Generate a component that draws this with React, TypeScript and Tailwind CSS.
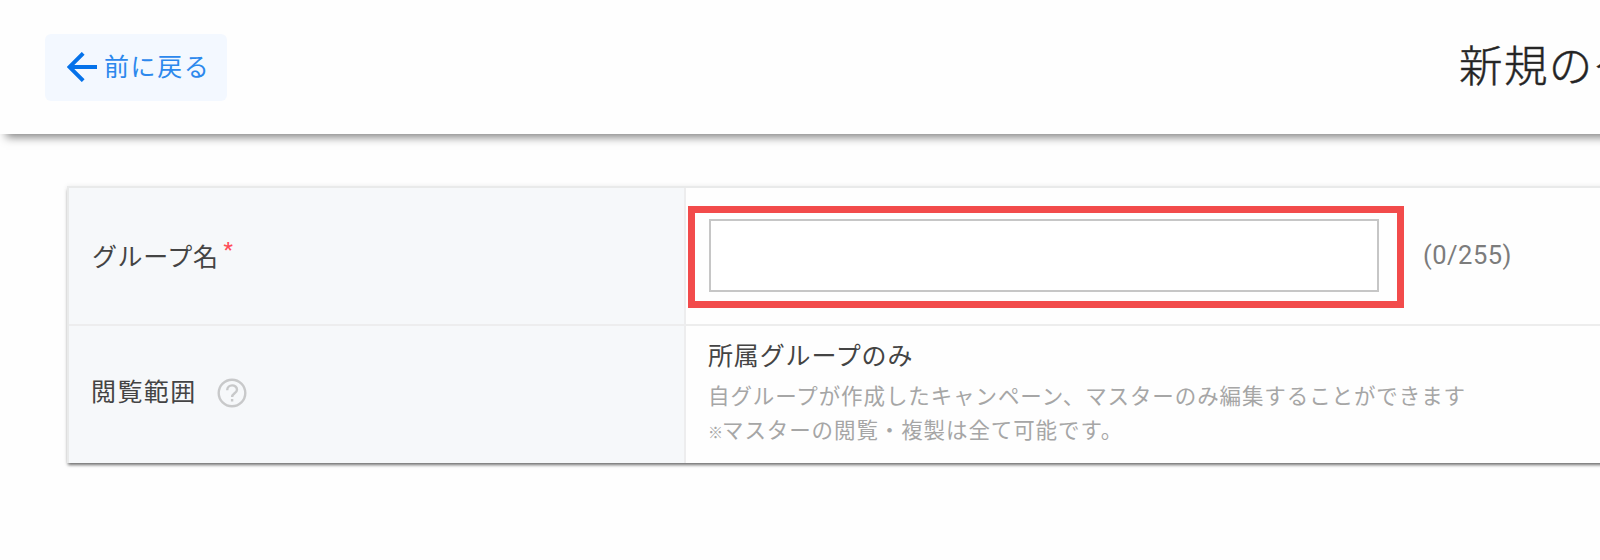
import React from 'react';

function BackArrow() {
  return (
    <svg className="h-[30px] w-[30px] shrink-0" viewBox="0 0 30 30" fill="none" stroke="#0572ea" strokeWidth="3.9">
      <path d="M30 15H3M16.2 1.3L2.6 15l13.6 13.7" />
    </svg>
  );
}

function HelpIcon() {
  return (
    <svg className="ml-[20px] h-[30px] w-[30px] shrink-0" viewBox="0 0 30 30" fill="none" stroke="#c8c9ca" strokeWidth="2.4">
      <circle cx="15" cy="15" r="13.3" />
      <path d="M10.2 12.2c0-6.6 9.8-6.2 9.8-.5 0 3.4-4.9 3.8-4.9 7.3M15.1 21v2.6" />
    </svg>
  );
}

export default function App() {
  return (
    <div className="h-[560px] w-full overflow-hidden bg-[#fefefe] font-['Roboto','Noto_Sans_CJK_JP',sans-serif] text-[25px] leading-[36px] tracking-[0.6px] text-[#444]">
      <header className="-mr-5 flex h-[134px] items-center justify-between bg-[#fefefe] pl-[45px] pr-5 shadow-[4px_5px_9px_-2px_rgba(0,0,0,0.5)]">
        <button className="flex h-[67px] w-[182px] items-center rounded-[6px] bg-[#f3f8ff] pl-[22px] tracking-[1.6px] text-[#2c88ed]">
          <BackArrow />
          <span className="ml-[7px] whitespace-nowrap pt-[2px]">前に戻る</span>
        </button>
        <h1 className="w-[141px] overflow-hidden whitespace-nowrap pt-px text-[43.5px] font-light leading-[64px] tracking-[1.4px] text-[#222] [-webkit-text-stroke:0.5px_#333]">新規のグ</h1>
      </header>

      <main className="pl-[67px] pt-[52px]">
        <section className="grid w-[1600px] grid-cols-[617px_1fr] grid-rows-[138px_137px] border-l-2 border-t-2 border-[#e9eaea] bg-[#fefefe] shadow-[0_3px_3px_-1px_rgba(0,0,0,0.55),0_0_5px_rgba(0,0,0,0.08)]">
          <div className="flex items-center border-b-2 border-r-2 border-[#ededee] bg-[#f6f8fa] pl-[23px] pt-[4px]">
            <span>グループ名</span>
            <span className="mb-[17px] ml-[5px] text-[21px] font-medium text-[#ff4d59]">*</span>
          </div>
          <div className="relative flex items-center border-b-2 border-[#ededed] pb-[2px] pl-[23px]">
            <input aria-label="グループ名" className="h-[73px] w-[670px] border-2 border-[#c6c6c6] bg-white px-4 outline-none" />
            <span className="ml-[44px] text-[25.5px] tracking-[0.5px] text-[#7c7c7c]">(0/255)</span>
            <div className="pointer-events-none absolute left-[2px] top-[18px] h-[102px] w-[716px] border-[7px] border-[#f24b4b]" />
          </div>
          <div className="flex items-center border-r-2 border-[#ededee] bg-[#f6f8fa] pb-[4px] pl-[22px]">
            <span className="tracking-[1.4px]">閲覧範囲</span>
            <HelpIcon />
          </div>
          <div className="pl-[22px] pt-[13px]">
            <p className="tracking-[0.85px]">所属グループのみ</p>
            <div className="mt-[5px] whitespace-nowrap text-[21.5px] leading-[34px] tracking-[0.9px] text-[#a6a6a6]">
              <p>自グループが作成したキャンペーン、マスターのみ編集することができます</p>
              <p><span className="inline-block w-[14px] text-[15px] font-medium tracking-normal">※</span>マスターの閲覧・複製は全て可能です。</p>
            </div>
          </div>
        </section>
      </main>
    </div>
  );
}
